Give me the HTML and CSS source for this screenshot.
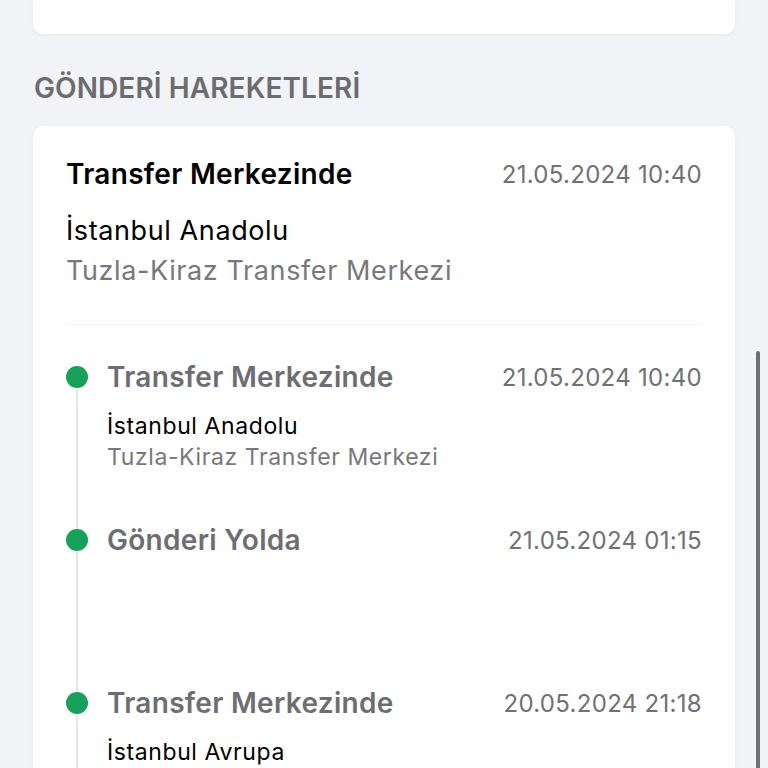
FILE: index.html
```html
<!DOCTYPE html>
<html lang="tr">

<head>
    <meta charset="UTF-8">
    <meta name="viewport" content="width=device-width, initial-scale=1.0">
    <title>Gönderi Hareketleri</title>
    <link rel="stylesheet" href="styles.css">
</head>

<body>
    <div class="screen">
        <div class="card card-top"></div>

        <h2 class="section-title">GÖNDERİ HAREKETLERİ</h2>

        <div class="card moves">
            <div class="current">
                <div class="row">
                    <span class="status">Transfer Merkezinde</span>
                    <span class="date">21.05.2024 10:40</span>
                </div>
                <div class="city">İstanbul Anadolu</div>
                <div class="branch">Tuzla-Kiraz Transfer Merkezi</div>
            </div>

            <ul class="timeline">
                <li class="step first">
                    <div class="marker">
                        <span class="rail-top"></span>
                        <span class="dot"></span>
                        <span class="rail"></span>
                    </div>
                    <div class="step-body">
                        <div class="row">
                            <span class="status">Transfer Merkezinde</span>
                            <span class="date">21.05.2024 10:40</span>
                        </div>
                        <div class="city">İstanbul Anadolu</div>
                        <div class="branch">Tuzla-Kiraz Transfer Merkezi</div>
                    </div>
                </li>
                <li class="step">
                    <div class="marker">
                        <span class="rail-top"></span>
                        <span class="dot"></span>
                        <span class="rail"></span>
                    </div>
                    <div class="step-body">
                        <div class="row">
                            <span class="status">Gönderi Yolda</span>
                            <span class="date">21.05.2024 01:15</span>
                        </div>
                    </div>
                </li>
                <li class="step">
                    <div class="marker">
                        <span class="rail-top"></span>
                        <span class="dot"></span>
                        <span class="rail"></span>
                    </div>
                    <div class="step-body">
                        <div class="row">
                            <span class="status">Transfer Merkezinde</span>
                            <span class="date">20.05.2024 21:18</span>
                        </div>
                        <div class="city">İstanbul Avrupa</div>
                    </div>
                </li>
            </ul>
        </div>

        <!-- overlay scroll indicator -->
        <div class="scrollbar"></div>
    </div>
</body>

</html>
```

FILE: styles.css
```css
* {
    box-sizing: border-box;
}

html,
body {
    margin: 0;
    height: 100%;
    overflow: hidden;
}

body {
    background: #f2f3f6;
    font-family: Inter, "Noto Sans", sans-serif;
    color: #000;
}

.screen {
    position: relative;
    height: 768px;
    padding: 0 33px;
}

.card {
    background: #ffffff;
    border-radius: 10px;
    box-shadow: 0 1px 4px rgba(0, 0, 0, 0.05);
}

.card-top {
    height: 34px;
    border-radius: 0 0 10px 10px;
}

.section-title {
    margin: 38px 0 22px 1px;
    font-size: 28px;
    line-height: 32px;
    font-weight: 600;
    color: #6b6b70;
    letter-spacing: 0.1px;
}

.moves {
    padding: 32px 33px 0;
    min-height: 700px;
}

.row {
    display: flex;
    justify-content: space-between;
    align-items: center;
    height: 32px;
}

.status {
    font-size: 28px;
    font-weight: 600;
    letter-spacing: 0.3px;
}

.date {
    font-size: 24px;
    letter-spacing: 0.3px;
    color: #707075;
}

.current {
    padding-bottom: 33px;
    border-bottom: 1px solid #f1f1f3;
}

.current .city {
    margin-top: 21px;
    font-size: 27px;
    letter-spacing: 0.6px;
    line-height: 40px;
}

.current .branch {
    font-size: 27px;
    letter-spacing: 0.6px;
    line-height: 40px;
    color: #77777c;
}

.timeline {
    list-style: none;
    margin: 0;
    padding: 0;
}

.step {
    display: flex;
    gap: 19px;
    min-height: 163px;
}

.step.first {
    margin-top: 36px;
}

.marker {
    display: flex;
    flex-direction: column;
    align-items: center;
    width: 22px;
    flex-shrink: 0;
}

.rail-top {
    height: 5px;
    width: 2px;
    background: #e6e6e9;
}

.first .rail-top {
    background: transparent;
}

.dot {
    width: 22px;
    height: 22px;
    border-radius: 50%;
    background: #17a05a;
}

.rail {
    flex: 1;
    width: 2px;
    background: #e6e6e9;
}

.step-body {
    flex: 1;
}

.step .status {
    color: #6d6d72;
}

.step .city {
    margin-top: 18px;
    font-size: 23px;
    letter-spacing: 0.6px;
    line-height: 31px;
}

.step .branch {
    font-size: 23px;
    letter-spacing: 0.6px;
    line-height: 31px;
    color: #77777c;
}

.scrollbar {
    position: absolute;
    left: 756px;
    top: 351px;
    width: 4px;
    height: 440px;
    border-radius: 2px;
    background: #707070;
}
```
